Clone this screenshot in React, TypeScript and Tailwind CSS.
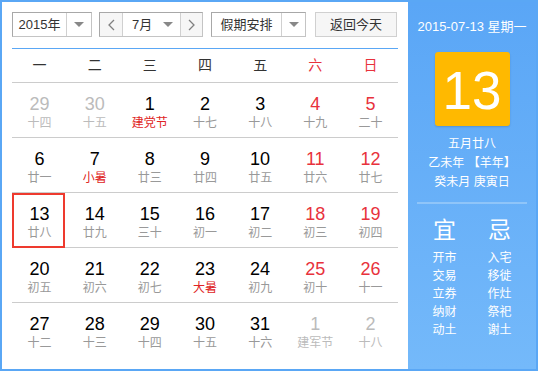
import React from 'react'

type Day = { n: number; lunar: string; out?: boolean; fest?: boolean; weekend?: boolean; today?: boolean }

const weeks: Day[][] = [
  [
    { n: 29, lunar: '十四', out: true },
    { n: 30, lunar: '十五', out: true },
    { n: 1, lunar: '建党节', fest: true },
    { n: 2, lunar: '十七' },
    { n: 3, lunar: '十八' },
    { n: 4, lunar: '十九', weekend: true },
    { n: 5, lunar: '二十', weekend: true },
  ],
  [
    { n: 6, lunar: '廿一' },
    { n: 7, lunar: '小暑', fest: true },
    { n: 8, lunar: '廿三' },
    { n: 9, lunar: '廿四' },
    { n: 10, lunar: '廿五' },
    { n: 11, lunar: '廿六', weekend: true },
    { n: 12, lunar: '廿七', weekend: true },
  ],
  [
    { n: 13, lunar: '廿八', today: true },
    { n: 14, lunar: '廿九' },
    { n: 15, lunar: '三十' },
    { n: 16, lunar: '初一' },
    { n: 17, lunar: '初二' },
    { n: 18, lunar: '初三', weekend: true },
    { n: 19, lunar: '初四', weekend: true },
  ],
  [
    { n: 20, lunar: '初五' },
    { n: 21, lunar: '初六' },
    { n: 22, lunar: '初七' },
    { n: 23, lunar: '大暑', fest: true },
    { n: 24, lunar: '初九' },
    { n: 25, lunar: '初十', weekend: true },
    { n: 26, lunar: '十一', weekend: true },
  ],
  [
    { n: 27, lunar: '十二' },
    { n: 28, lunar: '十三' },
    { n: 29, lunar: '十四' },
    { n: 30, lunar: '十五' },
    { n: 31, lunar: '十六' },
    { n: 1, lunar: '建军节', out: true },
    { n: 2, lunar: '十八', out: true },
  ],
]

const weekdays = ['一', '二', '三', '四', '五', '六', '日']
const yi = ['开市', '交易', '立券', '纳财', '动土']
const ji = ['入宅', '移徙', '作灶', '祭祀', '谢土']

function Caret() {
  return <span className="block w-0 h-0 border-l-[5px] border-r-[5px] border-t-[5px] border-l-transparent border-r-transparent border-t-[#888]" />
}

function Chevron({ dir }: { dir: 'left' | 'right' }) {
  return (
    <svg width="7" height="12" viewBox="0 0 7 12" className="block">
      <polyline
        points={dir === 'left' ? '6,1 1,6 6,11' : '1,1 6,6 1,11'}
        fill="none"
        stroke="#808080"
        strokeWidth="1.3"
      />
    </svg>
  )
}

function DayCell({ d }: { d: Day }) {
  const numColor = d.out ? 'text-[#bbbbbb]' : d.weekend ? 'text-[#e8323c]' : 'text-black'
  const lunarColor = d.out ? 'text-[#bbbbbb]' : d.fest ? 'text-[#e02424]' : 'text-[#999999]'
  return (
    <div className="relative flex flex-col items-center pt-[10px]">
      {d.today && <span className="absolute left-0 top-0 w-[53px] h-[55px] border-2 border-[#ee3a2e]" />}
      <span className={`text-[18px] leading-[22px] ${numColor}`}>{d.n}</span>
      <span className={`text-[12px] leading-[16px] ${lunarColor}`}>{d.lunar}</span>
    </div>
  )
}

export default function App() {
  return (
    <div
      className="w-[538px] h-[371px] border-2 border-[#5aa7f5] flex bg-white"
      style={{ fontFamily: '"Liberation Sans", "Noto Sans CJK SC", sans-serif' }}
    >
      <div className="w-[406px] bg-white px-[10px] pt-[10px]">
        <div className="flex h-[25px] text-[13px] text-[#333]">
          <div className="flex w-[80px] border border-[#c4c4c4] border-l-[#a8a8a8] border-t-[#a8a8a8]">
            <span className="flex-1 flex items-center justify-center">2015年</span>
            <span className="w-[25px] border-l border-[#d0d0d0] flex items-center justify-center"><Caret /></span>
          </div>
          <div className="ml-[7px] flex w-[104px] border border-[#c4c4c4] border-l-[#a8a8a8] border-t-[#a8a8a8]">
            <span className="w-[22px] bg-[#f6f6f6] flex items-center justify-center"><Chevron dir="left" /></span>
            <span className="flex-1 border-l border-r border-[#d0d0d0] flex items-center pl-[9px] pr-[7px] justify-between">
              <span>7月</span>
              <Caret />
            </span>
            <span className="w-[21px] bg-[#f6f6f6] flex items-center justify-center"><Chevron dir="right" /></span>
          </div>
          <div className="ml-[8px] flex w-[95px] border border-[#c4c4c4] border-l-[#a8a8a8] border-t-[#a8a8a8]">
            <span className="flex-1 flex items-center justify-center">假期安排</span>
            <span className="w-[24px] border-l border-[#d0d0d0] flex items-center justify-center"><Caret /></span>
          </div>
          <div className="ml-[9px] w-[82px] border border-[#d0d0d0] bg-[#f6f6f6] flex items-center justify-center">返回今天</div>
        </div>
        <div className="mt-[11px] h-[1px] bg-[#5aa7f5]" />
        <div className="grid grid-cols-7 h-[33px] items-center text-[14px] text-[#333]">
          {weekdays.map((w, i) => (
            <span key={w} className={`text-center ${i >= 5 ? 'text-[#e8323c]' : ''}`}>{w}</span>
          ))}
        </div>
        {weeks.map((row, i) => (
          <div key={i} className="grid grid-cols-7 h-[55px] border-t border-[#cccccc]">
            {row.map((d, j) => <DayCell key={j} d={d} />)}
          </div>
        ))}
      </div>
      <div className="flex-1 flex flex-col items-center bg-gradient-to-b from-[#5aa6f6] to-[#74b9fa] text-white pt-[17px]">
        <div className="text-[13px] leading-[16px]">2015-07-13 星期一</div>
        <div className="mt-[17px] w-[75px] h-[74px] rounded-[3px] bg-[#ffb900] shadow-[0_1px_2px_rgba(0,0,0,0.15)] flex items-center justify-center text-[53px] leading-none pt-[2px]">
          13
        </div>
        <div className="mt-[9px] text-[12px] leading-[19px] text-center">
          <div>五月廿八</div>
          <div>乙未年 【羊年】</div>
          <div>癸未月 庚寅日</div>
        </div>
        <div className="mt-[10px] w-[110px] h-[2px] bg-[#8fc5f9]" />
        <div className="mt-[14px] grid grid-cols-2 w-[110px] text-center">
          <span className="text-[23px] leading-[24px]">宜</span>
          <span className="text-[23px] leading-[24px]">忌</span>
          <div className="mt-[7px] text-[12px] leading-[18px] flex flex-col">
            {yi.map((t) => <span key={t}>{t}</span>)}
          </div>
          <div className="mt-[7px] text-[12px] leading-[18px] flex flex-col">
            {ji.map((t) => <span key={t}>{t}</span>)}
          </div>
        </div>
      </div>
    </div>
  )
}
